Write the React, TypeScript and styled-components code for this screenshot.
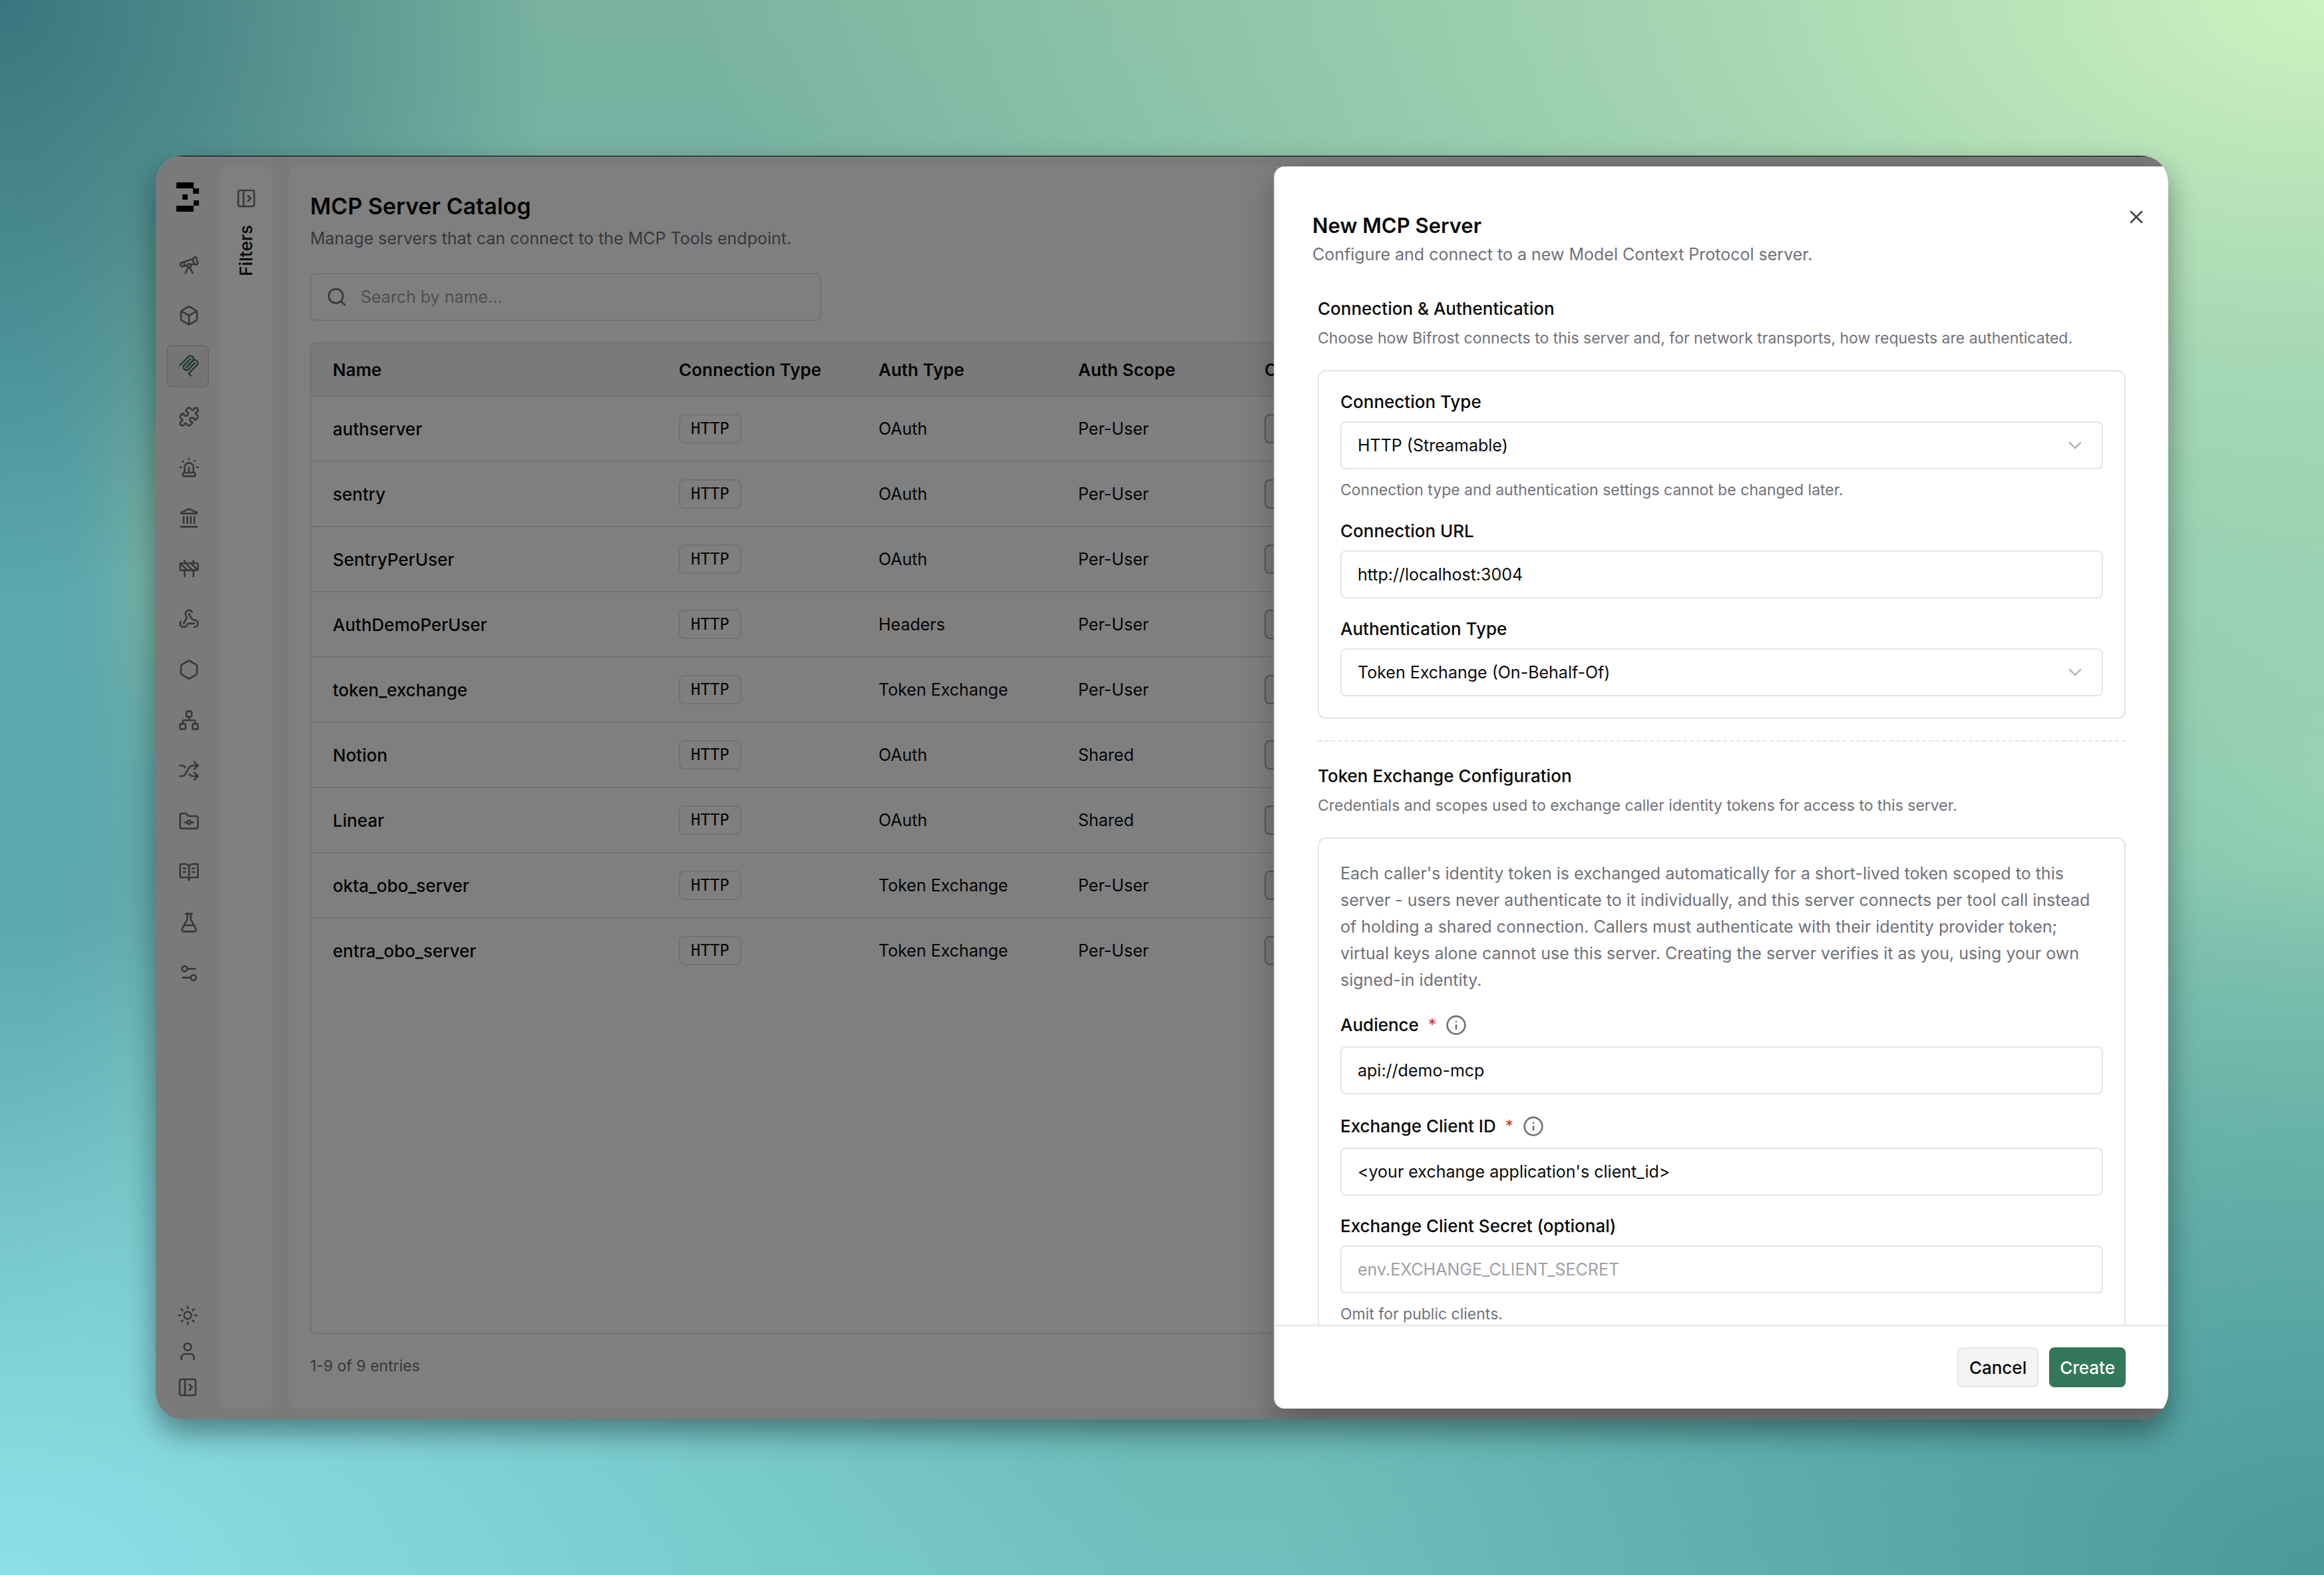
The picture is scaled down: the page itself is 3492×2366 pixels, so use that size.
import React from "react";
import styled, { createGlobalStyle } from "styled-components";
import {
  Telescope, Box, Puzzle, Siren, Landmark, Construction, Webhook, Hexagon, Network, Shuffle,
  FolderGit, BookOpenText, FlaskConical, Settings2, Sun, User, PanelLeftOpen, Search, X,
  ChevronDown, Info,
} from "lucide-react";

const GlobalStyle = createGlobalStyle`
  *, *::before, *::after { box-sizing: border-box; }
  body { margin: 0; }
  body, button, input, select { font-family: Inter, "Liberation Sans", sans-serif; }
  h1, h2, h3, p { margin: 0; }
`;

const ink = "#0a0a0a";
const muted = "#71717a";
const line = "#e4e4e4";

const Backdrop = styled.div`
  display: flex;
  min-height: 100vh;
  padding: 234px;
  background:
    radial-gradient(ellipse 24% 38% at 0% 0%, #37767f 0%, rgba(55, 118, 127, 0.65) 40%, rgba(55, 118, 127, 0) 100%),
    radial-gradient(ellipse 70% 60% at 100% 0%, #ccf2bf 0%, rgba(180, 226, 184, 0.75) 38%, rgba(160, 215, 180, 0) 100%),
    radial-gradient(ellipse 50% 42% at 0% 100%, #8be0e8 0%, rgba(139, 224, 232, 0.5) 50%, rgba(139, 224, 232, 0) 100%),
    radial-gradient(ellipse 7% 45% at 0% 45%, #5ba8b0 0%, rgba(91, 168, 176, 0.9) 50%, rgba(91, 168, 176, 0) 100%),
    radial-gradient(ellipse 4% 14% at 7% 35%, #7cb5a0 0%, rgba(124, 181, 160, 0) 100%),
    radial-gradient(ellipse 45% 45% at 100% 100%, #4a9a9a 0%, rgba(74, 154, 154, 0.5) 50%, rgba(74, 154, 154, 0) 100%),
    radial-gradient(ellipse 30% 45% at 100% 50%, #8fceb2 0%, rgba(143, 206, 178, 0) 100%),
    linear-gradient(180deg, #7ab3a0 0%, #64aaaa 55%, #70c1bd 100%);
`;

const AppWindow = styled.div`
  position: relative;
  flex: 1;
  min-width: 0;
  display: flex;
  height: calc(100vh - 468px);
  overflow: hidden;
  border-radius: 40px;
  background: #f4f4f4;
  box-shadow: 0 20px 44px rgba(0, 0, 0, 0.4);
  color: ${ink};
`;

const Sidebar = styled.nav`
  display: flex;
  flex-direction: column;
  justify-content: space-between;
  align-items: center;
  width: 96px;
  padding: 40px 16px 32px;
`;

const SideTop = styled.div`
  display: flex;
  flex-direction: column;
  align-items: center;
  gap: 48px;
`;

const SideList = styled.div`
  display: flex;
  flex-direction: column;
  gap: 12px;
`;

const SideButton = styled.button<{ $active?: boolean }>`
  display: flex;
  align-items: center;
  justify-content: center;
  width: 64px;
  height: 64px;
  padding: 0 0 0 4px;
  border: 2px solid ${(p) => (p.$active ? "#c9d8d1" : "transparent")};
  border-radius: 8px;
  background: ${(p) => (p.$active ? "#ebebeb" : "transparent")};
  color: ${(p) => (p.$active ? "#33785b" : muted)};
`;

const SideFooter = styled.div`
  display: flex;
  flex-direction: column;
  gap: 22px;
`;

const IconButton = styled.button`
  display: flex;
  padding: 0;
  border: 0;
  background: none;
  color: ${muted};
`;

const FilterPanel = styled.aside`
  display: flex;
  flex-direction: column;
  align-items: center;
  gap: 24px;
  width: 80px;
  margin: 16px 24px 16px 0;
  padding-top: 32px;
  border-radius: 12px;
  background: #fff;
`;

const FilterTitle = styled.span`
  writing-mode: vertical-rl;
  transform: rotate(180deg);
  font-size: 26px;
  line-height: 40px;
  font-weight: 500;
`;

const Main = styled.main`
  flex: 1;
  min-width: 0;
  display: flex;
  flex-direction: column;
  margin: 16px 16px 16px 0;
  padding: 32px 32px 48px;
  border-radius: 12px;
  background: #fff;
`;

const PageTitle = styled.h1`
  font-size: 34px;
  line-height: 56px;
  font-weight: 600;
`;

const PageText = styled.p`
  font-size: 25px;
  line-height: 40px;
  color: ${muted};
`;

const SearchBox = styled.label`
  display: flex;
  align-items: center;
  gap: 20px;
  width: 768px;
  height: 72px;
  margin: 32px 0;
  padding: 0 22px;
  border: 2px solid ${line};
  border-radius: 8px;
  color: ${muted};
`;

const SearchInput = styled.input`
  flex: 1;
  min-width: 0;
  padding: 0;
  border: 0;
  outline: 0;
  background: none;
  font-size: 25px;
  &::placeholder { color: #9f9fa9; opacity: 1; }
`;

const TableFrame = styled.div`
  flex: 1;
  overflow: hidden;
  border: 2px solid ${line};
  border-radius: 8px;
`;

const Table = styled.table`
  width: 100%;
  table-layout: fixed;
  border-collapse: separate;
  border-spacing: 0;
  font-size: 25px;
`;

const HeadCell = styled.th<{ $w?: number }>`
  width: ${(p) => (p.$w ? `${p.$w}px` : "auto")};
  height: 80px;
  padding: 0 32px;
  border-bottom: 2px solid ${line};
  background: #f4f4f4;
  text-align: left;
  font-size: 26px;
  font-weight: 600;
  white-space: nowrap;
`;

const Row = styled.tr`
  &:last-child td { border-bottom-color: transparent; }
`;

const Cell = styled.td<{ $strong?: boolean }>`
  height: 98px;
  padding: 0 32px;
  border-bottom: 2px solid ${line};
  font-size: ${(p) => (p.$strong ? "26px" : "25px")};
  font-weight: ${(p) => (p.$strong ? 500 : 400)};
`;

const Badge = styled.span`
  display: inline-flex;
  align-items: center;
  height: 44px;
  padding: 0 16px;
  border: 2px solid ${line};
  border-radius: 8px;
  font-family: "DejaVu Sans Mono", monospace;
  font-size: 24px;
  vertical-align: middle;
`;

const StateBadge = styled.span`
  display: inline-block;
  width: 120px;
  height: 44px;
  border: 2px solid #94b8a8;
  border-radius: 8px;
  background: #eff2f0;
  vertical-align: middle;
`;

const Count = styled.p`
  margin-top: 32px;
  font-size: 23px;
  line-height: 32px;
  color: ${muted};
`;

const Overlay = styled.div`
  position: absolute;
  inset: 0;
  border-top: 1px solid #000;
  background: rgba(0, 0, 0, 0.5);
`;

const Drawer = styled.form`
  position: absolute;
  top: 16px;
  right: 0;
  bottom: 16px;
  width: 1344px;
  display: flex;
  flex-direction: column;
  border-left: 2px solid ${line};
  border-radius: 16px 0 0 16px;
  background: #fff;
  box-shadow: 0 20px 50px rgba(0, 0, 0, 0.25);
`;

const DrawerHead = styled.header`
  display: flex;
  justify-content: space-between;
  padding: 66px 32px 42px 56px;
`;

const DrawerTitle = styled.h2`
  font-size: 31px;
  line-height: 46px;
  font-weight: 600;
`;

const CloseButton = styled.button`
  display: flex;
  align-self: flex-start;
  margin-top: -6px;
  padding: 0;
  border: 0;
  background: none;
  color: #444;
`;

const DrawerBody = styled.div`
  flex: 1;
  min-height: 0;
  overflow: hidden;
  padding: 0 64px;
`;

const SectionTitle = styled.h3`
  font-size: 26px;
  line-height: 40px;
  font-weight: 500;
`;

const Hint = styled.p`
  font-size: 23px;
  line-height: 32px;
  color: ${muted};
`;

const SectionHint = styled(Hint)`
  margin: 8px 0 32px;
`;

const Card = styled.div`
  display: flex;
  flex-direction: column;
  gap: 32px;
  padding: 32px;
  border: 2px solid ${line};
  border-radius: 12px;
`;

const Divider = styled.hr`
  margin: 32px 0;
  border: 0;
  border-top: 2px dashed ${line};
`;

const Note = styled.p`
  font-size: 25px;
  line-height: 40px;
  color: ${muted};
`;

const Field = styled.div<{ $required?: boolean }>`
  display: flex;
  flex-direction: column;
  gap: ${(p) => (p.$required ? "16px" : "15px")};
`;

const LabelRow = styled.div`
  display: flex;
  align-items: center;
  gap: 14px;
`;

const Label = styled.label`
  font-size: 26px;
  line-height: 28px;
  font-weight: 500;
`;

const Required = styled.span`
  color: #dc2626;
  font-size: 24px;
  line-height: 28px;
`;

const TextInput = styled.input`
  width: 100%;
  height: 72px;
  padding: 0 24px;
  border: 2px solid ${line};
  border-radius: 8px;
  background: #fff;
  color: ${ink};
  font-size: 25px;
  &::placeholder { color: #9f9fa9; opacity: 1; }
`;

const SelectWrap = styled.div`
  position: relative;
  svg { position: absolute; right: 26px; top: 20px; color: #b8b8bc; pointer-events: none; }
`;

const Select = styled.select`
  display: block;
  width: 100%;
  height: 72px;
  padding: 0 72px 0 24px;
  border: 2px solid ${line};
  border-radius: 8px;
  background: #fff;
  color: ${ink};
  font-size: 25px;
  appearance: none;
`;

const DrawerFoot = styled.footer`
  display: flex;
  justify-content: flex-end;
  gap: 16px;
  padding: 32px 64px;
  border-top: 2px solid ${line};
`;

const Button = styled.button<{ $primary?: boolean }>`
  height: 60px;
  padding: 0 ${(p) => (p.$primary ? "14px" : "16px")};
  border: 2px solid ${(p) => (p.$primary ? "#34785b" : line)};
  border-radius: 8px;
  background: ${(p) => (p.$primary ? "#34785b" : "#f4f4f4")};
  color: ${(p) => (p.$primary ? "#fff" : ink)};
  font-size: 26px;
  font-weight: 500;
`;

const Logo = () => (
  <svg width="34" height="44" viewBox="0 0 34 44" fill="#000" role="img" aria-label="Bifrost">
    <rect x="0" y="0" width="26" height="9" />
    <rect x="25" y="9" width="9" height="8" />
    <rect x="9" y="18" width="8" height="8" />
    <rect x="26" y="27" width="8" height="8" />
    <rect x="0" y="35" width="26" height="9" />
  </svg>
);

const McpIcon = ({ size = 32 }: { size?: number }) => (
  <svg width={size} height={size} viewBox="11 20 172 172" fill="none" stroke="currentColor" strokeWidth="13" strokeLinecap="round">
    <path d="M25 97.8528L92.8822 29.9706C102.255 20.598 117.451 20.598 126.823 29.9706C136.196 39.3431 136.196 54.5391 126.823 63.9117L75.5581 115.177" />
    <path d="M76.2653 114.47L126.823 63.9117C136.196 54.5391 151.392 54.5391 160.765 63.9117L161.118 64.2652C170.491 73.6378 170.491 88.8338 161.118 98.2063L99.7248 159.6C96.6006 162.724 96.6006 167.789 99.7248 170.913L112.331 183.52" />
    <path d="M109.853 46.9411L59.6482 97.1457C50.2757 106.518 50.2757 121.714 59.6482 131.087C69.0208 140.459 84.2168 140.459 93.5894 131.087L143.794 80.8822" />
  </svg>
);

const navItems = [
  { name: "Observability", Icon: Telescope },
  { name: "Models", Icon: Box },
  { name: "MCP", Icon: McpIcon, active: true },
  { name: "Plugins", Icon: Puzzle },
  { name: "Alerts", Icon: Siren },
  { name: "Governance", Icon: Landmark },
  { name: "Guardrails", Icon: Construction },
  { name: "Webhooks", Icon: Webhook },
  { name: "Cluster", Icon: Hexagon },
  { name: "Network", Icon: Network },
  { name: "Routing", Icon: Shuffle },
  { name: "Repository", Icon: FolderGit },
  { name: "Docs", Icon: BookOpenText },
  { name: "Evals", Icon: FlaskConical },
  { name: "Settings", Icon: Settings2 },
];

const servers = [
  ["authserver", "OAuth", "Per-User"],
  ["sentry", "OAuth", "Per-User"],
  ["SentryPerUser", "OAuth", "Per-User"],
  ["AuthDemoPerUser", "Headers", "Per-User"],
  ["token_exchange", "Token Exchange", "Per-User"],
  ["Notion", "OAuth", "Shared"],
  ["Linear", "OAuth", "Shared"],
  ["okta_obo_server", "Token Exchange", "Per-User"],
  ["entra_obo_server", "Token Exchange", "Per-User"],
];

const SelectField = ({ id, label, value, hint }: { id: string; label: string; value: string; hint?: string }) => (
  <Field>
    <Label htmlFor={id}>{label}</Label>
    <SelectWrap>
      <Select id={id} defaultValue={value}>
        <option>{value}</option>
      </Select>
      <ChevronDown size={32} />
    </SelectWrap>
    {hint && <Hint>{hint}</Hint>}
  </Field>
);

const TextField = ({ id, label, value, placeholder, hint, required }: {
  id: string; label: string; value?: string; placeholder?: string; hint?: string; required?: boolean;
}) => (
  <Field $required={required}>
    <LabelRow>
      <Label htmlFor={id}>{label}</Label>
      {required && <Required>*</Required>}
      {required && <Info size={32} color={muted} />}
    </LabelRow>
    <TextInput id={id} defaultValue={value} placeholder={placeholder} />
    {hint && <Hint>{hint}</Hint>}
  </Field>
);

export default function App() {
  return (
    <Backdrop>
      <GlobalStyle />
      <AppWindow>
        <Sidebar>
          <SideTop>
            <Logo />
            <SideList>
              {navItems.map(({ name, Icon, active }) => (
                <SideButton key={name} aria-label={name} $active={active}>
                  <Icon size={32} />
                </SideButton>
              ))}
            </SideList>
          </SideTop>
          <SideFooter>
            <IconButton aria-label="Theme"><Sun size={32} /></IconButton>
            <IconButton aria-label="Account"><User size={32} /></IconButton>
            <IconButton aria-label="Expand sidebar"><PanelLeftOpen size={32} /></IconButton>
          </SideFooter>
        </Sidebar>
        <FilterPanel>
          <IconButton aria-label="Show filters"><PanelLeftOpen size={32} /></IconButton>
          <FilterTitle>Filters</FilterTitle>
        </FilterPanel>
        <Main>
          <PageTitle>MCP Server Catalog</PageTitle>
          <PageText>Manage servers that can connect to the MCP Tools endpoint.</PageText>
          <SearchBox>
            <Search size={32} />
            <SearchInput aria-label="Search by name" placeholder="Search by name..." />
          </SearchBox>
          <TableFrame>
            <Table>
              <thead>
                <tr>
                  <HeadCell $w={520}>Name</HeadCell>
                  <HeadCell $w={300}>Connection Type</HeadCell>
                  <HeadCell $w={300}>Auth Type</HeadCell>
                  <HeadCell $w={280}>Auth Scope</HeadCell>
                  <HeadCell>Code Mode</HeadCell>
                </tr>
              </thead>
              <tbody>
                {servers.map(([name, auth, scope]) => (
                  <Row key={name}>
                    <Cell $strong>{name}</Cell>
                    <Cell><Badge>HTTP</Badge></Cell>
                    <Cell>{auth}</Cell>
                    <Cell>{scope}</Cell>
                    <Cell><StateBadge /></Cell>
                  </Row>
                ))}
              </tbody>
            </Table>
          </TableFrame>
          <Count>1-9 of 9 entries</Count>
        </Main>
        <Overlay />
        <Drawer onSubmit={(e) => e.preventDefault()}>
          <DrawerHead>
            <div>
              <DrawerTitle>New MCP Server</DrawerTitle>
              <PageText>Configure and connect to a new Model Context Protocol server.</PageText>
            </div>
            <CloseButton type="button" aria-label="Close"><X size={32} /></CloseButton>
          </DrawerHead>
          <DrawerBody>
            <SectionTitle>Connection &amp; Authentication</SectionTitle>
            <SectionHint>Choose how Bifrost connects to this server and, for network transports, how requests are authenticated.</SectionHint>
            <Card>
              <SelectField id="type" label="Connection Type" value="HTTP (Streamable)" hint="Connection type and authentication settings cannot be changed later." />
              <TextField id="url" label="Connection URL" value="http://localhost:3004" />
              <SelectField id="auth" label="Authentication Type" value="Token Exchange (On-Behalf-Of)" />
            </Card>
            <Divider />
            <SectionTitle>Token Exchange Configuration</SectionTitle>
            <SectionHint>Credentials and scopes used to exchange caller identity tokens for access to this server.</SectionHint>
            <Card>
              <Note>
                Each caller's identity token is exchanged automatically for a short-lived token scoped to this server - users never
                authenticate to it individually, and this server connects per tool call instead of holding a shared connection. Callers
                must authenticate with their identity provider token; virtual keys alone cannot use this server. Creating the server
                verifies it as you, using your own signed-in identity.
              </Note>
              <TextField id="audience" label="Audience" value="api://demo-mcp" required />
              <TextField id="client" label="Exchange Client ID" value="<your exchange application's client_id>" required />
              <TextField id="secret" label="Exchange Client Secret (optional)" placeholder="env.EXCHANGE_CLIENT_SECRET" hint="Omit for public clients." />
            </Card>
          </DrawerBody>
          <DrawerFoot>
            <Button type="button">Cancel</Button>
            <Button type="submit" $primary>Create</Button>
          </DrawerFoot>
        </Drawer>
      </AppWindow>
    </Backdrop>
  );
}
